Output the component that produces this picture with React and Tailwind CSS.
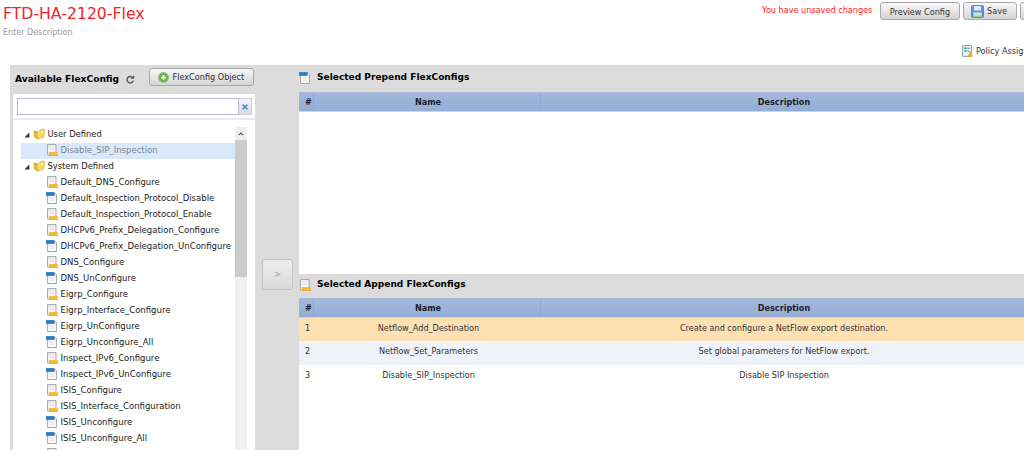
const TREE = [
  ['Default_DNS_Configure', 'append'],
  ['Default_Inspection_Protocol_Disable', 'prepend'],
  ['Default_Inspection_Protocol_Enable', 'append'],
  ['DHCPv6_Prefix_Delegation_Configure', 'append'],
  ['DHCPv6_Prefix_Delegation_UnConfigure', 'prepend'],
  ['DNS_Configure', 'append'],
  ['DNS_UnConfigure', 'prepend'],
  ['Eigrp_Configure', 'append'],
  ['Eigrp_Interface_Configure', 'append'],
  ['Eigrp_UnConfigure', 'prepend'],
  ['Eigrp_Unconfigure_All', 'prepend'],
  ['Inspect_IPv6_Configure', 'append'],
  ['Inspect_IPv6_UnConfigure', 'prepend'],
  ['ISIS_Configure', 'append'],
  ['ISIS_Interface_Configuration', 'append'],
  ['ISIS_Unconfigure', 'prepend'],
  ['ISIS_Unconfigure_All', 'prepend'],
];

const APPENDED = [
  ['Netflow_Add_Destination', 'Create and configure a NetFlow export destination.', 'bg-[#fde1b3]'],
  ['Netflow_Set_Parameters', 'Set global parameters for NetFlow export.', 'bg-[#f0f2fa]'],
  ['Disable_SIP_Inspection', 'Disable SIP Inspection', 'bg-white'],
];

function DocIcon({ kind }) {
  return (
    <svg className="h-3 w-3 shrink-0" viewBox="0 0 12 12">
      {kind === 'append' ? (
        <>
          <path d="M1.6 .6H10v10.3H1.6z" fill="#f7f7f8" stroke="#a3a3a6" />
          <path d="M3.5 3h4.5M3.5 5h4.5" stroke="#dedee2" />
          <path d="M3 8h8.8v3.7H3z" fill="#fbb93c" />
          <path d="M3 11h8.8v.7H3z" fill="#f3a12e" />
        </>
      ) : (
        <>
          <path d="M1.6 1.2H9L10.4 2.7v8.8H1.6z" fill="#fafafb" stroke="#a3a5a8" />
          <path d="M4 6.2h4M4 8.2h4" stroke="#dedfe5" />
          <path d="M0 .1h8.6v3.8H0z" fill="#2f7fc1" />
        </>
      )}
    </svg>
  );
}

function Folder({ label }) {
  return (
    <div className="flex h-4 shrink-0 items-center pb-[2px] pl-[3px]">
      <svg className="mt-[2px] h-[6px] w-[6px]" viewBox="0 0 6 6">
        <path d="M5.3 .5v5H.4z" fill="#333" />
      </svg>
      <svg className="ml-[3px] h-3 w-3" viewBox="0 0 12 12">
        <path d="M.8 3.6 1.6 3 3.8 3.2 4.6 4.4V11L1.4 9z" fill="#e8c03c" stroke="#bd931f" strokeWidth=".6" />
        <path d="M3.8 4.4 6.2 3.8 7.2 1.8 10.6.9 11.5 1.6 10.8 9 4.6 11.2z" fill="#fbdc5c" stroke="#cca02b" strokeWidth=".6" />
        <path d="M4.8 5.4l5.8-2" stroke="#fff2a8" strokeWidth="1" />
      </svg>
      <span className="ml-[2.5px] text-[8.35px] text-[#222]">{label}</span>
    </div>
  );
}

function Leaf({ label, kind, selected }) {
  return (
    <div className={selected ? 'flex h-4 shrink-0 items-center bg-[#d9e8fb] pb-[2px] pl-[25px] text-[#7b8793]' : 'flex h-4 shrink-0 items-center pb-[2px] pl-[25px] text-[#222]'}>
      <DocIcon kind={kind} />
      <span className="ml-[2.5px] text-[8.53px]">{label}</span>
    </div>
  );
}

const BUTTON = 'flex shrink-0 items-center rounded-[3px] border border-[#a9a9a9] bg-linear-to-b from-[#f8f8f8] to-[#d4d4d4] text-[#333]';

function GridHead() {
  return (
    <div className="flex h-[20px] shrink-0 items-center border-t border-b border-t-[#a9bbd7] border-b-[#c5d6ee] bg-linear-to-b from-[#a3b8dc] to-[#93add6] text-[8.1px] font-bold text-[#1c1f26]">
      <span className="flex h-full w-[15px] items-center border-r border-[#91a8cf] pl-[6px]">#</span>
      <span className="flex h-full w-[228px] items-center justify-center border-r border-[#91a8cf] pl-[2px]">Name</span>
      <span className="w-[485px] pl-[3px] text-center">Description</span>
    </div>
  );
}

export default function App() {
  return (
    <div className="flex h-[450px] w-[1024px] flex-col overflow-hidden bg-white font-['DejaVu_Sans',sans-serif] text-[8.15px] leading-none whitespace-nowrap">
      <header className="flex h-[65px] shrink-0 justify-between overflow-hidden">
        <div className="pl-[3px] pt-[6px]">
          <h1 className="text-[15.7px] leading-[16px] text-[#ed2330]">FTD-HA-2120-Flex</h1>
          <p className="mt-[5px] text-[8px] leading-[11px] text-[#999]">Enter Description</p>
        </div>
        <div className="flex w-[262px] flex-col">
          <div className="flex pt-[2px]">
            <span className="w-[118px] shrink-0 pt-[4px] text-[8.15px] text-[#ff2020]">You have unsaved changes</span>
            <button className={`${BUTTON} h-[18px] w-[80px] justify-center pt-[2px]`}>Preview Config</button>
            <button className={`${BUTTON} ml-[3px] h-[18px] w-[54px] pl-[7px]`}>
              <svg className="mr-[3px] h-[13px] w-[13px]" viewBox="0 0 13 13">
                <rect x=".5" y=".5" width="12" height="12" rx="1" fill="#5c95df" stroke="#5688cf" />
                <path d="M3 1h7v4.5H3z" fill="#dbeafd" />
                <path d="M2.5 7.5h8V12h-8z" fill="#d3ebc8" />
                <path d="M2.5 10.5h8V12h-8z" fill="#95cb81" />
              </svg>
              Save
            </button>
            <button aria-label="More" className={`${BUTTON} ml-[3px] h-[18px] w-[54px]`} />
          </div>
          <div className="mt-[25px] flex items-center pl-[200px] text-[#333]">
            <svg className="mr-[3px] h-[12px] w-[11px] shrink-0" viewBox="0 0 11 12">
              <path d="M.6 .6h9v10.8h-9z" fill="#edf4fc" stroke="#83a3c9" />
              <path d="M2.2 2.6h2.3v1.5H2.2zM2.2 5.2h2.3v1.5H2.2z" fill="#3e9276" />
              <path d="M5.3 3.3h2.8M5.3 6h2" stroke="#6684a8" />
              <circle cx="8.2" cy="7.5" r="1.5" fill="#f7b644" />
              <path d="M5.8 11.8c0-4 5-4 5 0z" fill="#f2a42d" />
            </svg>
            Policy Assig
          </div>
        </div>
      </header>

      <main className="ml-[10px] flex min-h-0 flex-1 bg-[#dcdcdc]">
        <aside className="ml-[3px] flex w-[242px] shrink-0 flex-col">
          <div className="flex h-[29px] shrink-0 items-start pl-[2px] pt-[3px]">
            <h2 className="mt-[7px] w-[104px] shrink-0 text-[9.1px] font-bold text-black">Available FlexConfig</h2>
            <svg className="ml-[7px] mt-[7px] h-[9px] w-[9px] shrink-0" viewBox="0 0 9 9">
              <path d="M7.3 5.6A3.2 3.2 0 1 1 6.2 2.1" fill="none" stroke="#555" strokeWidth="1.4" />
              <path d="M4.7 3.8H8.2V.3z" fill="#555" />
            </svg>
            <button className={`${BUTTON} ml-[14px] h-[18px] w-[105px] pl-[8px]`}>
              <svg className="mr-[3.5px] h-[11px] w-[11px] shrink-0" viewBox="0 0 11 11">
                <circle cx="5.5" cy="5.5" r="5" fill="#67b84d" stroke="#91c47e" />
                <path d="M5.5 3v5M3 5.5h5" stroke="#fff" strokeWidth="1.5" />
              </svg>
              <span className="pt-px">FlexConfig Object</span>
            </button>
          </div>
          <div className="flex h-[26px] shrink-0 border-b-2 border-[#ebebeb] bg-white pl-[4px] pt-[4px]">
            <div className="h-[17px] w-[222px] border border-[#b8b8d8] bg-white" />
            <div className="flex h-[17px] w-[13px] items-center justify-center border border-l-0 border-[#cfcfde] bg-linear-to-b from-[#f4f4f8] to-[#d7dae4]">
              <svg className="h-[6px] w-[6px]" viewBox="0 0 5 5">
                <path d="M.5 .5l4 4M4.5 .5l-4 4" stroke="#4d91ca" strokeWidth="1.3" />
              </svg>
            </div>
          </div>
          <div className="flex min-h-0 flex-1 overflow-hidden bg-white pl-[8px] pt-[7px]">
            <div className="flex w-[214px] shrink-0 flex-col overflow-hidden">
              <Folder label="User Defined" />
              <Leaf label="Disable_SIP_Inspection" kind="append" selected />
              <Folder label="System Defined" />
              {TREE.map(([label, kind]) => (
                <Leaf key={label} label={label} kind={kind} />
              ))}
              <Leaf label="" kind="append" />
            </div>
            <div className="w-[12px] shrink-0 bg-[#efefef]">
              <div className="flex h-[13px] items-center justify-center">
                <svg className="h-[4px] w-[6px]" viewBox="0 0 6 4">
                  <path d="M.8 3.2 3 1l2.2 2.2" fill="none" stroke="#555" strokeWidth="1.2" />
                </svg>
              </div>
              <div className="h-[137px] bg-[#cbcbcb]" />
            </div>
          </div>
        </aside>

        <div className="flex w-[44px] shrink-0 justify-center pl-[1px] pt-[194px]">
          <button className="flex h-[31px] w-[31px] items-center justify-center rounded-[3px] border border-[#c2c2c2] bg-linear-to-b from-[#ededed] to-[#dadada] text-[8.6px] font-bold text-[#aaa]">&gt;</button>
        </div>

        <section className="flex min-w-0 flex-1 flex-col overflow-hidden bg-white">
          <div className="flex h-[27px] shrink-0 items-center bg-[#dcdcdc] pb-[1px]">
            <DocIcon kind="prepend" />
            <h2 className="ml-[6px] text-[9.05px] font-bold text-black">Selected Prepend FlexConfigs</h2>
          </div>
          <GridHead />
          <div className="h-[162px] shrink-0" />
          <div className="flex h-[24px] shrink-0 items-center bg-[#dcdcdc] pb-[2px]">
            <DocIcon kind="append" />
            <h2 className="ml-[6px] text-[9.05px] font-bold text-black">Selected Append FlexConfigs</h2>
          </div>
          <GridHead />
          {APPENDED.map(([name, description, tone], i) => (
            <div key={name} className={`flex h-[23.3px] shrink-0 items-center pb-[3px] leading-[10px] text-[#333] ${tone}`}>
              <span className="w-[15px] pl-[6px]">{i + 1}</span>
              <span className="w-[228px] pl-[2px] text-center">{name}</span>
              <span className="w-[485px] pl-[3px] text-center">{description}</span>
            </div>
          ))}
        </section>
      </main>
    </div>
  );
}
